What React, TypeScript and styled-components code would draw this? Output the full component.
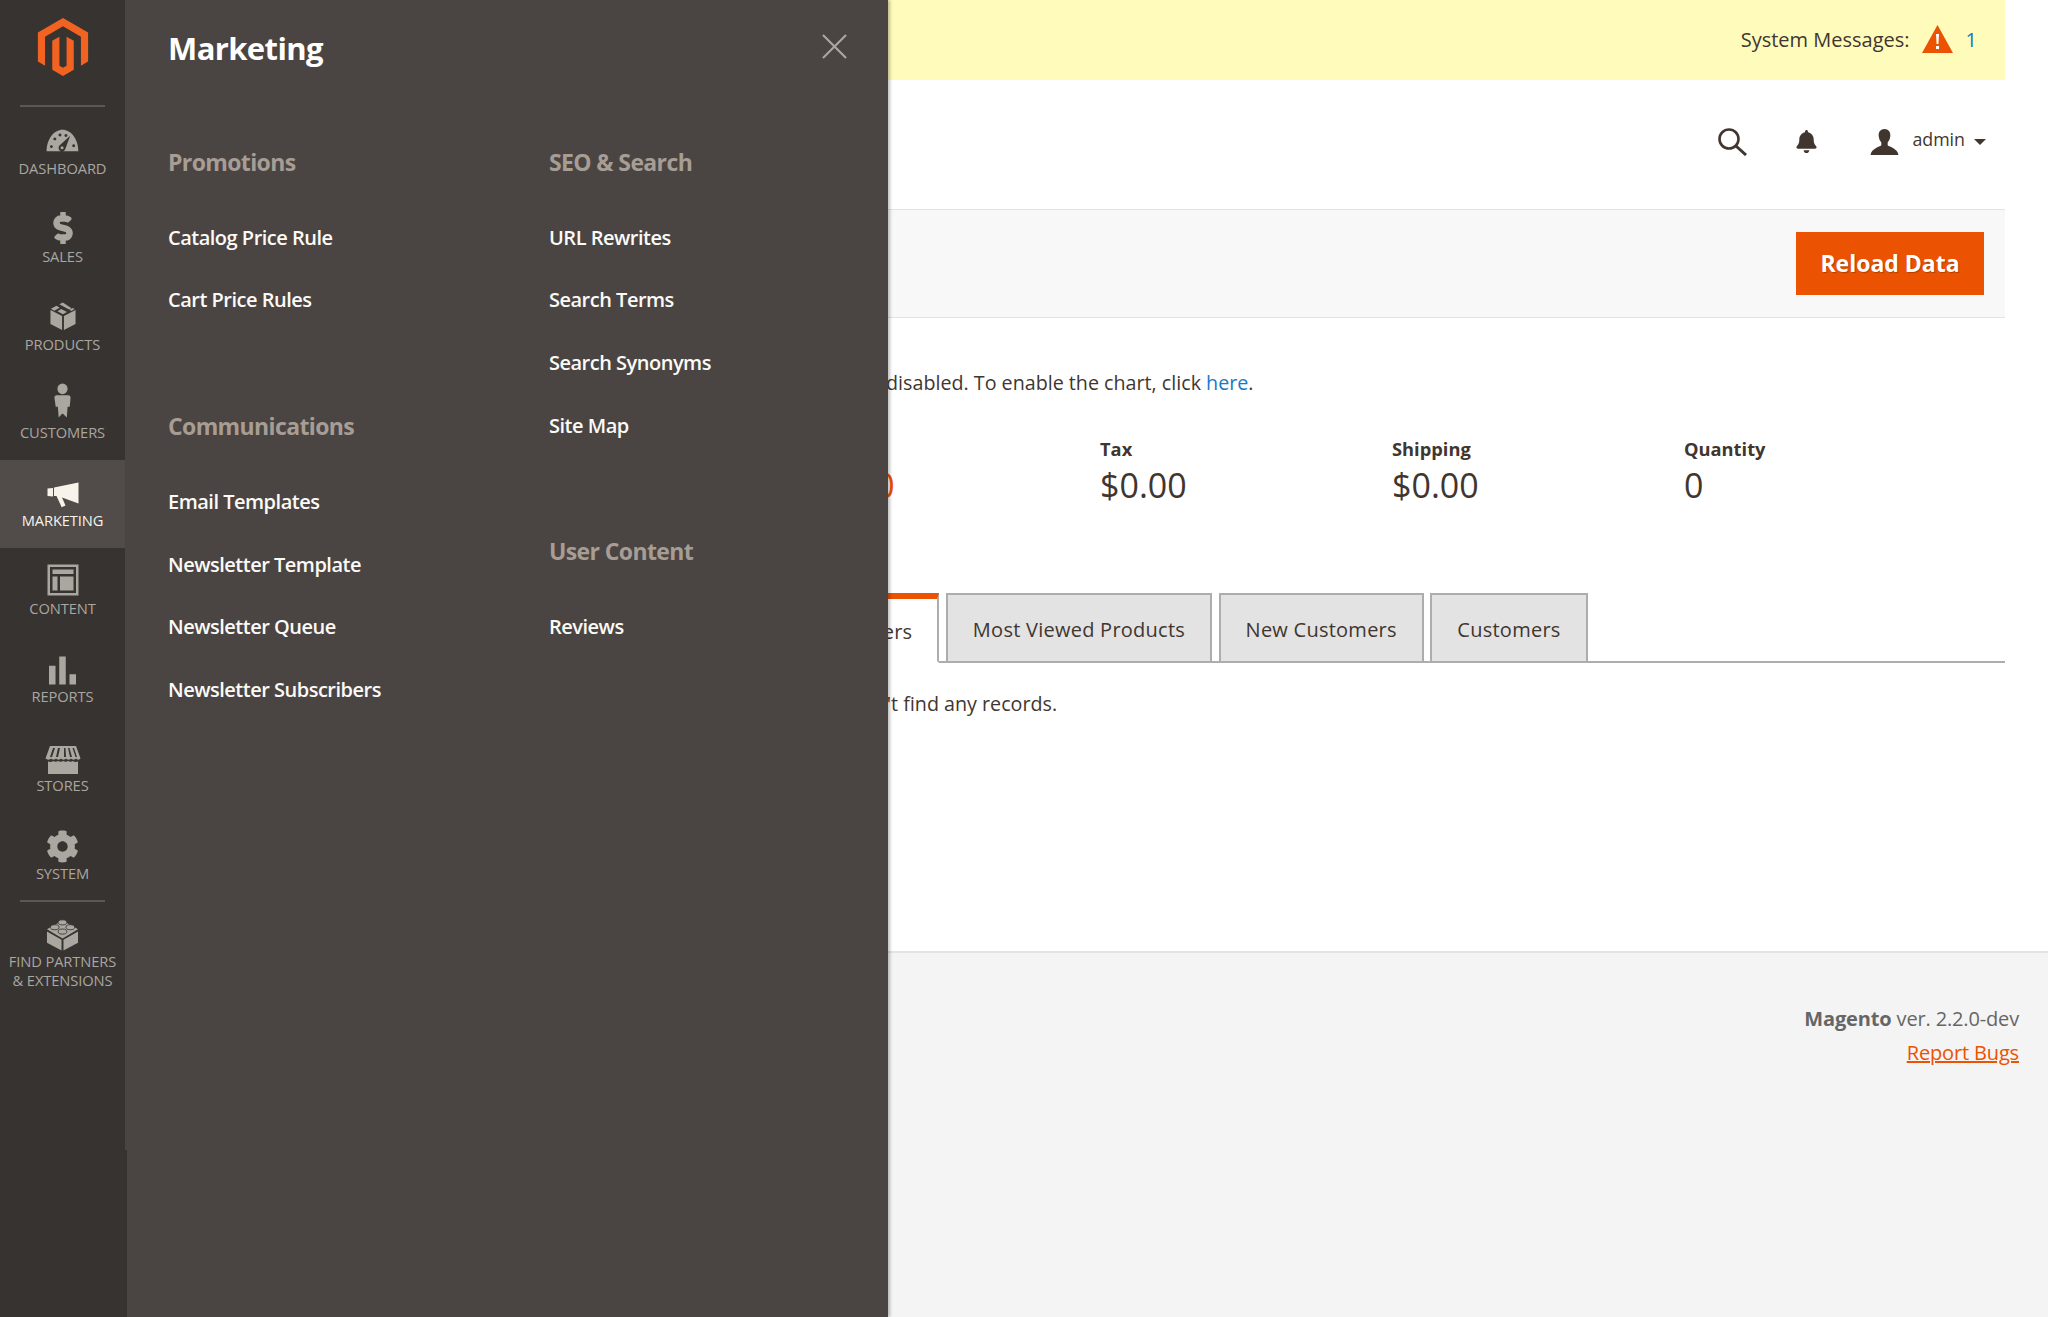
import React from "react";
import styled, { createGlobalStyle } from "styled-components";
import { SiMagento } from "react-icons/si";
import { FaBell, FaCog, FaDollarSign } from "react-icons/fa";

const GlobalStyle = createGlobalStyle`
  html, body {
    margin: 0;
    height: 100%;
    overflow: hidden;
    background: #fff;
  }
  body {
    font-family: "Open Sans", "Liberation Sans", sans-serif;
    color: #41362f;
    font-size: 19.7px;
  }
  #root { height: 100%; }
`;

const Shell = styled.div`
  position: relative;
  display: flex;
  height: 1317px;
  overflow: hidden;
`;

const Sidebar = styled.nav`
  position: relative;
  z-index: 3;
  flex: 0 0 125px;
  background: #373330;
  display: flex;
  flex-direction: column;
  &::after {
    content: "";
    position: absolute;
    top: 1150px;
    bottom: 0;
    left: 125px;
    width: 2px;
    background: #373330;
  }
`;

const LogoBox = styled.div`
  height: 105px;
  display: flex;
  align-items: flex-start;
  justify-content: center;
  padding-top: 18px;
  box-sizing: border-box;
  color: #f26322;
`;

const Divider = styled.div`
  height: 2px;
  margin: 0 20px;
  background: #5d5753;
`;

const NavItem = styled.div<{ $active?: boolean }>`
  height: 88.15px;
  display: flex;
  flex-direction: column;
  align-items: center;
  justify-content: flex-end;
  padding-bottom: 18px;
  box-sizing: border-box;
  text-align: center;
  background: ${(p) => (p.$active ? "#514c49" : "transparent")};
  color: ${(p) => (p.$active ? "#f7f3eb" : "#aaa6a0")};
`;

const NavIcon = styled.div<{ $gap: number }>`
  height: 42px;
  display: flex;
  align-items: center;
  justify-content: center;
  margin-bottom: ${(p) => p.$gap}px;
`;

const NavLabel = styled.div`
  font-size: 14.7px;
  line-height: 18.5px;
  text-transform: uppercase;
  white-space: nowrap;
  letter-spacing: -0.1px;
`;

const PartnerItem = styled(NavItem)`
  height: auto;
  padding: 11px 0 0;
  justify-content: flex-start;
`;

const Panel = styled.aside`
  position: absolute;
  z-index: 2;
  top: 0;
  bottom: 0;
  left: 125px;
  width: 763px;
  background: #4a4542;
  box-shadow: 2px 0 3px rgba(0, 0, 0, 0.25);
  padding: 0 0 0 43px;
  box-sizing: border-box;
  color: #fff;
`;

const PanelHead = styled.div`
  display: flex;
  align-items: center;
  justify-content: space-between;
  height: 96px;
  padding-right: 41px;
`;

const PanelTitle = styled.h2`
  margin: 0;
  font-size: 31px;
  font-weight: 700;
  letter-spacing: -0.6px;
  line-height: 40px;
  color: #fff;
`;

const CloseButton = styled.div`
  display: flex;
  margin-top: -4px;
  color: #aaa6a0;
`;

const PanelColumns = styled.div`
  display: flex;
  padding-top: 44px;
`;

const PanelColumn = styled.div`
  flex: 0 0 381px;
`;

const Section = styled.div`
  margin-bottom: 73px;
`;

const SectionTitle = styled.h3`
  margin: 0 0 22px;
  font-size: 23px;
  font-weight: 700;
  line-height: 44px;
  letter-spacing: -0.62px;
  color: #a79d95;
`;

const MenuLink = styled.div`
  height: 62.6px;
  display: flex;
  align-items: center;
  font-size: 20px;
  font-weight: 600;
  letter-spacing: -0.5px;
  color: #fbfaf7;
`;

const Page = styled.div`
  flex: 1;
  min-width: 0;
  display: flex;
  flex-direction: column;
`;

const PageInner = styled.div`
  height: 951px;
  padding-right: 43px;
  box-sizing: border-box;
  display: flex;
  flex-direction: column;
`;

const Notice = styled.div`
  height: 80px;
  background: #fffbbb;
  display: flex;
  align-items: center;
  justify-content: flex-end;
  padding: 0 28px 2px 0;
  box-sizing: border-box;
  font-size: 20px;
  color: #41362f;
`;

const NoticeCount = styled.span`
  color: #1979c3;
  margin-left: 13px;
`;

const NoticeIcon = styled.span`
  display: flex;
  margin-left: 12px;
`;

const Header = styled.header`
  height: 129px;
  display: flex;
  align-items: center;
  justify-content: flex-end;
  padding: 0 19px 6px 40px;
  box-sizing: border-box;
`;

const HeaderTools = styled.div`
  display: flex;
  align-items: center;
`;

const ToolButton = styled.span<{ $gap: number }>`
  display: flex;
  margin-right: ${(p) => p.$gap}px;
`;

const AdminName = styled.span`
  font-size: 17.8px;
  margin-left: 13px;
  margin-bottom: 5px;
`;

const Caret = styled.span`
  width: 0;
  height: 0;
  margin-left: 9px;
  margin-top: 1px;
  border-left: 6px solid transparent;
  border-right: 6px solid transparent;
  border-top: 6px solid #41362f;
`;

const Toolbar = styled.div`
  height: 109px;
  background: #f8f8f8;
  border-top: 1px solid #e3e3e3;
  border-bottom: 1px solid #e3e3e3;
  box-sizing: border-box;
  display: flex;
  align-items: center;
  justify-content: flex-end;
  padding-right: 21px;
`;

const ReloadButton = styled.button`
  width: 188px;
  height: 63px;
  background: #eb5202;
  border: 1px solid #eb5202;
  color: #fff;
  font-family: inherit;
  font-size: 23px;
  font-weight: 700;
  line-height: 58px;
  text-shadow: 1px 1px 1px rgba(0, 0, 0, 0.25);
  padding: 0 0 2px;
`;

const ChartNote = styled.p`
  margin: 52px 0 0;
  padding-left: 686px;
  line-height: 25px;
  white-space: nowrap;
`;

const TextLink = styled.span`
  color: #1979c3;
`;

const Stats = styled.div`
  display: flex;
  margin-top: 41px;
  padding-left: 683px;
`;

const Stat = styled.div`
  flex: 0 0 292px;
`;

const StatLabel = styled.div`
  font-size: 18.3px;
  font-weight: 700;
  line-height: 25px;
`;

const StatValue = styled.div<{ $accent?: boolean }>`
  font-size: 34px;
  font-weight: 500;
  line-height: 46px;
  margin-top: 1px;
  color: ${(p) => (p.$accent ? "#eb5202" : "#41362f")};
`;

const Tabs = styled.div`
  display: flex;
  margin-top: 85px;
  padding-left: 657px;
  border-bottom: 2px solid #adadad;
  height: 68px;
`;

const Tab = styled.div<{ $active?: boolean }>`
  box-sizing: border-box;
  display: flex;
  align-items: center;
  padding: 3px 25px 0;
  margin-right: 6.5px;
  font-size: 20px;
  letter-spacing: 0.25px;
  background: ${(p) => (p.$active ? "#fff" : "#e3e3e3")};
  border: 2px solid #adadad;
  border-top: ${(p) => (p.$active ? "6px solid #eb5202" : "2px solid #adadad")};
  border-bottom: ${(p) => (p.$active ? "2px solid #fff" : "0")};
  height: ${(p) => (p.$active ? "70px" : "68px")};
`;

const EmptyNote = styled.p`
  margin: 27.5px 0 0;
  padding-left: 665px;
  line-height: 25px;
  white-space: nowrap;
`;

const Footer = styled.footer`
  flex: 1;
  background: #f4f4f4;
  border-top: 2px solid #e3e3e3;
  box-sizing: border-box;
  padding: 51px 29px 0 0;
  text-align: right;
  font-size: 20px;
  letter-spacing: -0.15px;
  color: #666;
`;

const FooterLine = styled.div`
  height: 34px;
  line-height: 30px;
`;

const BugLink = styled.span`
  color: #eb5202;
  text-decoration: underline;
`;

const DashboardIcon = () => (
  <svg width="33" height="24" viewBox="0 0 38 28" fill="#aaa6a0">
    <path fillRule="evenodd" d="M0.500 27C0.500 13 9 2 19 2s18.500 11 18.500 25zM6 20a1.700 1.700 0 1 0 0.100 0zM10 11a1.700 1.700 0 1 0 0.100 0zM16 6.500a1.700 1.700 0 1 0 0.100 0zM23 7a1.700 1.700 0 1 0 0.100 0zM32 19a1.700 1.700 0 1 0 0.100 0zM28 9L15.500 20.500a4 4 0 1 0 6.500 4.500z" />
    <circle cx="18.500" cy="23" r="1.800" />
  </svg>
);

const ProductsIcon = () => (
  <svg width="26" height="28" viewBox="0 0 28 30" fill="#aaa6a0">
    <path d="M0.500 8.500L13 15v15L0.500 23.500zM27.500 8.500V23.500L15 30V15zM7 4l-6 3.300 3.500 2L10.500 6zM10 2.400l10.500 5.700 2.700-1.500L13.800 0.500zM23 9.500l3.500-2-2-1.200-3.500 2zM12 7.500L8 9.800l6 3.200 4.300-2.300z" />
  </svg>
);

const CustomersIcon = () => (
  <svg width="17" height="35" viewBox="0 0 20 36" fill="#aaa6a0" preserveAspectRatio="none">
    <ellipse cx="10" cy="6" rx="6" ry="5.500" />
    <path d="M3 12.500h14c1.500 0 2.500 1 2.500 2.500l-1 9.500h-2.500l-1 11-4.500-4-1 0-4 4-1-11H2L0.500 15c0-1.500 1-2.500 2.500-2.500z" />
  </svg>
);

const MarketingIcon = () => (
  <svg width="32" height="26" viewBox="0 0 32 26" fill="#f7f3eb">
    <path d="M0.500 6.500L6 6v8.500l-5.500-0.500zM7 5.500L31.500 0.500V21.500L15 15.500l3.500 8-3.800 1.800-5.200-11.300L7 14z" />
  </svg>
);

const ContentIcon = () => (
  <svg width="32" height="32" viewBox="0 0 32 32" fill="#aaa6a0">
    <path fillRule="evenodd" d="M0.500 0.500h31v31h-31zM3 3v26h26V3z" />
    <path d="M5.500 5.500h21v4.500h-21zM5.500 12.500h5v14h-5zM13 12.500h13.500v14H13z" />
  </svg>
);

const ReportsIcon = () => (
  <svg width="27" height="29" viewBox="0 0 29 30" fill="#aaa6a0">
    <path d="M0 10h7v20H0zM11 0h7v30h-7zM22 19h7v11h-7z" />
  </svg>
);

const StoresIcon = () => (
  <svg width="36" height="28" viewBox="0 0 36 28" fill="#aaa6a0">
    <path fillRule="evenodd" d="M5 0h26l4.500 12.500c-1 1.500-3.500 1.500-4.500 0-1 1.500-4 1.500-5 0-1 1.500-4 1.500-5 0-1 1.500-4 1.500-5 0-1 1.500-4 1.500-5 0-1 1.500-4 1.500-5 0-1 1.500-4 1.500-5.500 0zM8 2L5 11h2l3-9zM13 2l-2 9h2l2-9zM19 2v9h2l-0.500-9zM23 2l2 9h2l-2.500-9zM27.500 2l3 9H32L29 2z" />
    <path d="M3 15.500c2 .8 4 .5 5-.5 1.500 1 4 1 5 0 1.500 1 4 1 5 0 1.500 1 4 1 5 0 1.500 1 4 1 5 0 1 1 3 1.300 5 .5V28H3z" />
  </svg>
);

const PartnersIcon = () => (
  <svg width="33" height="33" viewBox="0 0 34 33" fill="#aaa6a0">
    <path d="M1 13.500L16 22v11L1 25zM33 13.500V25L18 33V22z" />
    <path d="M1 11L17 2l16 9-16 9.500z" />
    <g stroke="#373330" strokeWidth="0.900">
      <ellipse cx="17" cy="4" rx="4.500" ry="2.600" />
      <ellipse cx="9" cy="9" rx="4.500" ry="2.600" />
      <ellipse cx="25" cy="9" rx="4.500" ry="2.600" />
      <ellipse cx="17" cy="13.500" rx="4.500" ry="2.600" />
    </g>
  </svg>
);

const SearchIcon = () => (
  <svg width="31" height="28" viewBox="0 0 31 28" fill="none" stroke="#41362f" strokeWidth="2.600">
    <circle cx="12" cy="11" r="9.500" />
    <path d="M19 18l10 9" strokeWidth="3" />
  </svg>
);

const UserIcon = () => (
  <svg width="29" height="26" viewBox="0 0 29 27" fill="#41362f">
    <path d="M14.500 0c4 0 6.500 3 6 7.500-.3 3-1.500 5-2.700 6.500v3c2 2 10 3 11.200 10H0c1.200-7 9.200-8 11.200-10v-3C10 12.500 8.800 10.500 8.500 7.500 8 3 10.500 0 14.500 0z" />
  </svg>
);

const WarningIcon = () => (
  <svg width="31" height="28" viewBox="0 0 31 28">
    <path d="M15.500 0L31 28H0z" fill="#eb5202" />
    <path d="M14 9h3l-.6 10h-1.800zM14 21h3v3h-3z" fill="#fff" />
  </svg>
);

const CloseIcon = () => (
  <svg width="25" height="25" viewBox="0 0 26 26" stroke="currentColor" strokeWidth="2.200" fill="none">
    <path d="M1 1l24 24M25 1L1 25" />
  </svg>
);

const navItems: { label: string; icon: React.ReactNode; gap: number; active?: boolean }[] = [
  { label: "Dashboard", icon: <DashboardIcon />, gap: -2 },
  {
    label: "Sales",
    icon: <FaDollarSign size={32} color="#aaa6a0" stroke="#aaa6a0" strokeWidth={24} />,
    gap: -2,
  },
  { label: "Products", icon: <ProductsIcon />, gap: -2 },
  { label: "Customers", icon: <CustomersIcon />, gap: 2 },
  { label: "Marketing", icon: <MarketingIcon />, gap: -5, active: true },
  { label: "Content", icon: <ContentIcon />, gap: -2 },
  { label: "Reports", icon: <ReportsIcon />, gap: -4 },
  { label: "Stores", icon: <StoresIcon />, gap: -5 },
  { label: "System", icon: <FaCog size={33} color="#aaa6a0" />, gap: -4 },
];

const menu = [
  [
    { title: "Promotions", links: ["Catalog Price Rule", "Cart Price Rules"] },
    {
      title: "Communications",
      links: ["Email Templates", "Newsletter Template", "Newsletter Queue", "Newsletter Subscribers"],
    },
  ],
  [
    { title: "SEO & Search", links: ["URL Rewrites", "Search Terms", "Search Synonyms", "Site Map"] },
    { title: "User Content", links: ["Reviews"] },
  ],
];

const stats = [
  { label: "Revenue", value: "$0.00", accent: true },
  { label: "Tax", value: "$0.00" },
  { label: "Shipping", value: "$0.00" },
  { label: "Quantity", value: "0" },
];

const tabs = ["Bestsellers", "Most Viewed Products", "New Customers", "Customers"];

export default function App() {
  return (
    <>
      <GlobalStyle />
      <Shell>
        <Sidebar>
          <LogoBox>
            <SiMagento size={58} />
          </LogoBox>
          <Divider />
          {navItems.map((item) => (
            <NavItem key={item.label} $active={item.active}>
              <NavIcon $gap={item.gap}>{item.icon}</NavIcon>
              <NavLabel>{item.label}</NavLabel>
            </NavItem>
          ))}
          <Divider />
          <PartnerItem>
            <NavIcon $gap={-3}>
              <PartnersIcon />
            </NavIcon>
            <NavLabel>Find Partners</NavLabel>
            <NavLabel>&amp; Extensions</NavLabel>
          </PartnerItem>
        </Sidebar>

        <Panel>
          <PanelHead>
            <PanelTitle>Marketing</PanelTitle>
            <CloseButton>
              <CloseIcon />
            </CloseButton>
          </PanelHead>
          <PanelColumns>
            {menu.map((column) => (
              <PanelColumn key={column[0].title}>
                {column.map((section) => (
                  <Section key={section.title}>
                    <SectionTitle>{section.title}</SectionTitle>
                    {section.links.map((link) => (
                      <MenuLink key={link}>{link}</MenuLink>
                    ))}
                  </Section>
                ))}
              </PanelColumn>
            ))}
          </PanelColumns>
        </Panel>

        <Page>
          <PageInner>
            <Notice>
              System Messages:
              <NoticeIcon>
                <WarningIcon />
              </NoticeIcon>
              <NoticeCount>1</NoticeCount>
            </Notice>
            <Header>
              <HeaderTools>
                <ToolButton $gap={47}>
                  <SearchIcon />
                </ToolButton>
                <ToolButton $gap={52}>
                  <FaBell size={23} color="#41362f" />
                </ToolButton>
                <UserIcon />
                <AdminName>admin</AdminName>
                <Caret />
              </HeaderTools>
            </Header>
            <Toolbar>
              <ReloadButton>Reload Data</ReloadButton>
            </Toolbar>
            <ChartNote>
              Chart is disabled. To enable the chart, click <TextLink>here</TextLink>.
            </ChartNote>
            <Stats>
              {stats.map((stat) => (
                <Stat key={stat.label}>
                  <StatLabel>{stat.label}</StatLabel>
                  <StatValue $accent={stat.accent}>{stat.value}</StatValue>
                </Stat>
              ))}
            </Stats>
            <Tabs>
              {tabs.map((tab, i) => (
                <Tab key={tab} $active={i === 0}>
                  {tab}
                </Tab>
              ))}
            </Tabs>
            <EmptyNote>We couldn't find any records.</EmptyNote>
          </PageInner>
          <Footer>
            <FooterLine>
              <strong>Magento</strong> ver. 2.2.0-dev
            </FooterLine>
            <FooterLine>
              <BugLink>Report Bugs</BugLink>
            </FooterLine>
          </Footer>
        </Page>
      </Shell>
    </>
  );
}
